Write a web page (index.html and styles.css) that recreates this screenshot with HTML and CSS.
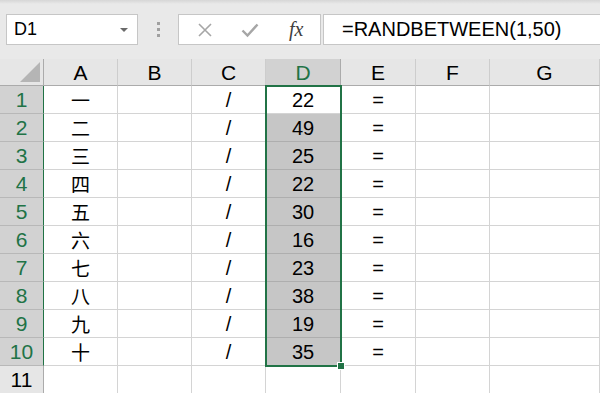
FILE: index.html
```html
<!DOCTYPE html>
<html lang="zh">
<head>
<meta charset="UTF-8" />
<title>Sheet1</title>
<link rel="stylesheet" href="styles.css">
</head>
<body>

<div class="bar">
  <div class="namebox">
    <span>D1</span>
    <span class="caret"></span>
  </div>
  <div class="dots"><i></i><i></i><i></i></div>
  <div class="btns">
    <svg class="ico" width="16" height="16" viewBox="0 0 16 16"><path d="M2 2 L14 14 M14 2 L2 14" stroke="#a6a6a6" stroke-width="1.6" fill="none"/></svg>
    <svg class="ico" width="18" height="16" viewBox="0 0 18 16"><path d="M1.5 8.5 L6.5 13.5 L16.5 2.5" stroke="#a6a6a6" stroke-width="2.4" fill="none"/></svg>
    <span class="fx">fx</span>
  </div>
  <div class="formula">=RANDBETWEEN(1,50)</div>
</div>

<div class="sheet">
  <div class="corner"><span class="tri"></span></div>
  <div class="colh">A</div>
  <div class="colh">B</div>
  <div class="colh">C</div>
  <div class="colh sel">D</div>
  <div class="colh">E</div>
  <div class="colh">F</div>
  <div class="colh">G</div>

  <div class="rowh sel">1</div><div class="c cjk">一</div><div class="c"></div><div class="c">/</div><div class="c">22</div><div class="c">=</div><div class="c"></div><div class="c"></div>
  <div class="rowh sel">2</div><div class="c cjk">二</div><div class="c"></div><div class="c">/</div><div class="c hi">49</div><div class="c">=</div><div class="c"></div><div class="c"></div>
  <div class="rowh sel">3</div><div class="c cjk">三</div><div class="c"></div><div class="c">/</div><div class="c hi">25</div><div class="c">=</div><div class="c"></div><div class="c"></div>
  <div class="rowh sel">4</div><div class="c cjk">四</div><div class="c"></div><div class="c">/</div><div class="c hi">22</div><div class="c">=</div><div class="c"></div><div class="c"></div>
  <div class="rowh sel">5</div><div class="c cjk">五</div><div class="c"></div><div class="c">/</div><div class="c hi">30</div><div class="c">=</div><div class="c"></div><div class="c"></div>
  <div class="rowh sel">6</div><div class="c cjk">六</div><div class="c"></div><div class="c">/</div><div class="c hi">16</div><div class="c">=</div><div class="c"></div><div class="c"></div>
  <div class="rowh sel">7</div><div class="c cjk">七</div><div class="c"></div><div class="c">/</div><div class="c hi">23</div><div class="c">=</div><div class="c"></div><div class="c"></div>
  <div class="rowh sel">8</div><div class="c cjk">八</div><div class="c"></div><div class="c">/</div><div class="c hi">38</div><div class="c">=</div><div class="c"></div><div class="c"></div>
  <div class="rowh sel">9</div><div class="c cjk">九</div><div class="c"></div><div class="c">/</div><div class="c hi">19</div><div class="c">=</div><div class="c"></div><div class="c"></div>
  <div class="rowh sel">10</div><div class="c cjk">十</div><div class="c"></div><div class="c">/</div><div class="c hi">35</div><div class="c">=</div><div class="c"></div><div class="c"></div>
  <div class="rowh">11</div><div class="c"></div><div class="c"></div><div class="c"></div><div class="c"></div><div class="c"></div><div class="c"></div><div class="c"></div>

  <div class="selbox"><span class="handle"></span></div>
</div>

</body>
</html>
```

FILE: styles.css
```css
body {
  margin: 0;
  font-family: "Liberation Sans", Arial, sans-serif;
  background: #fff;
  color: #000;
  overflow: hidden;
}

/* formula bar */
.bar {
  display: flex;
  align-items: flex-start;
  height: 59px;
  padding-top: 14px;
  box-sizing: border-box;
  background: linear-gradient(#d6d6d6, #e9e9e9 4px, #e9e9e9);
}
.namebox {
  display: flex;
  align-items: center;
  justify-content: space-between;
  margin-left: 6px;
  width: 132px;
  height: 31px;
  box-sizing: border-box;
  padding: 0 9px 0 7px;
  background: #fff;
  border: 1px solid #c6c6c6;
  font-size: 18px;
}
.caret {
  width: 0;
  height: 0;
  border-left: 4px solid transparent;
  border-right: 4px solid transparent;
  border-top: 4px solid #6a6a6a;
}
.dots {
  width: 40px;
  display: flex;
  flex-direction: column;
  align-items: center;
  gap: 3px;
  padding-top: 8px;
}
.dots i {
  width: 3px;
  height: 3px;
  background: #a0a0a0;
}
.btns {
  display: flex;
  align-items: center;
  width: 143px;
  height: 31px;
  box-sizing: border-box;
  padding-left: 18px;
  gap: 28px;
  background: #fff;
  border: 1px solid #c6c6c6;
}
.fx {
  font-family: "Liberation Serif", serif;
  font-style: italic;
  font-size: 20px;
  color: #404040;
  margin-left: 2px;
}
.formula {
  flex: 1;
  height: 31px;
  margin-left: 2px;
  box-sizing: border-box;
  padding-left: 18px;
  background: #fff;
  border: 1px solid #c6c6c6;
  border-right: none;
  font-size: 20px;
  line-height: 29px;
}

/* grid */
.sheet {
  display: grid;
  grid-template-columns: 44px 74px 74px 74px 75px 75px 74px 1fr;
  grid-template-rows: 27px repeat(11, 28px);
  position: relative;
}
.corner {
  background: #e6e6e6;
  border-right: 1px solid #ababab;
  border-bottom: 1px solid #ababab;
  position: relative;
}
.tri {
  position: absolute;
  right: 3px;
  bottom: 3px;
  width: 0;
  height: 0;
  border-left: 20px solid transparent;
  border-bottom: 20px solid #b5b5b5;
}
.colh {
  background: #e6e6e6;
  border-right: 1px solid #cdcdcd;
  border-bottom: 1px solid #ababab;
  text-align: center;
  font-size: 21px;
  line-height: 27px;
}
.colh.sel {
  background: #d2d2d2;
  color: #217346;
  border-right-color: #ababab;
}
.rowh {
  background: #e6e6e6;
  border-right: 1px solid #ababab;
  border-bottom: 1px solid #c8c8c8;
  text-align: center;
  font-size: 21px;
  line-height: 28px;
}
.rowh.sel {
  background: #d2d2d2;
  color: #217346;
  border-right: 1px solid #217346;
  border-bottom-color: #b8b8b8;
}
.c {
  border-right: 1px solid #d4d4d4;
  border-bottom: 1px solid #d4d4d4;
  text-align: center;
  font-size: 20px;
  line-height: 28px;
}
.cjk {
  font-family: "Noto Sans CJK SC", "Noto Sans CJK TC", sans-serif;
  font-size: 19px;
}
.c.hi {
  background: #c6c6c6;
  border-bottom-color: #aeaeae;
  border-right-color: #aeaeae;
}

/* selection D1:D10, drawn over the cells */
.selbox {
  grid-column: 5 / 6;
  grid-row: 2 / 12;
  position: absolute;
  top: -1px;
  left: -1px;
  right: -1px;
  bottom: -1px;
  border: 2px solid #217346;
  pointer-events: none;
}
.handle {
  position: absolute;
  right: -5px;
  bottom: -5px;
  width: 6px;
  height: 6px;
  background: #217346;
  border: 1px solid #fff;
}
```
